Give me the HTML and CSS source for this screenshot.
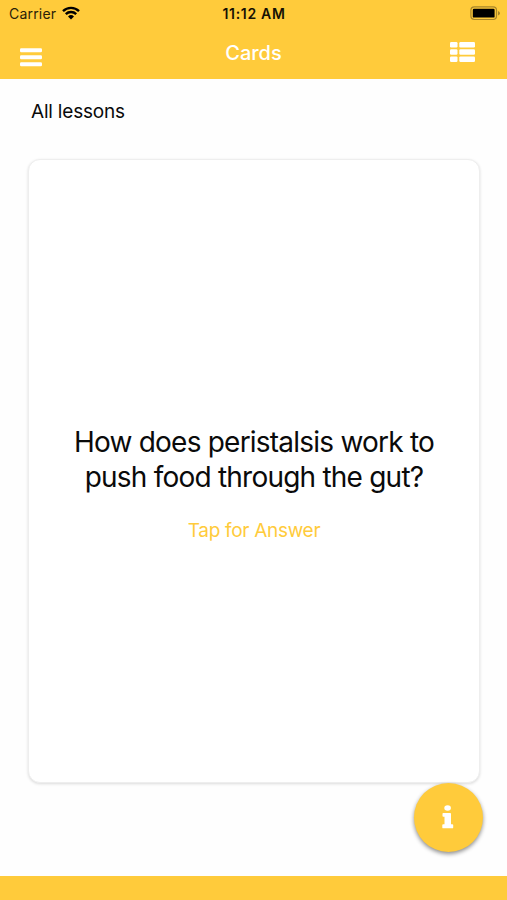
FILE: index.html
```html
<!DOCTYPE html>
<html lang="en">
<head>
    <meta charset="UTF-8">
    <meta name="viewport" content="width=device-width, initial-scale=1.0">
    <title>Cards</title>
    <link rel="stylesheet" href="styles.css">
</head>
<body>
    <header>
        <div class="status">
            <div class="carrier">
                <span>Carrier</span>
                <svg class="wifi" width="18" height="14" viewBox="0 0 18 14">
                    <path d="M1 5.2a11.4 11.4 0 0 1 16 0M3.8 8.2a7.4 7.4 0 0 1 10.4 0" fill="none" stroke="#000" stroke-width="2.4"/>
                    <path d="M6 10.4a4.4 4.4 0 0 1 6 0L9 13.5z"/>
                </svg>
            </div>
            <span class="clock">11:12 AM</span>
            <svg class="battery" width="31" height="15" viewBox="0 0 31 15">
                <rect x=".9" y=".9" width="25.6" height="12.6" rx="3.4" fill="none" stroke="#a8862a" stroke-width="1.2"/>
                <rect x="2.8" y="2.8" width="21.8" height="8.8" rx="1.2"/>
                <path d="M28 5v4.4q2-.9 2-2.2T28 5z" fill="#a8862a"/>
            </svg>
        </div>
        <div class="navbar">
            <svg class="menu" width="22" height="19" viewBox="0 0 22 19" fill="#fff">
                <rect y=".3" width="22" height="4" rx="1.2"/>
                <rect y="7.3" width="22" height="4" rx="1.2"/>
                <rect y="14.3" width="22" height="4" rx="1.2"/>
            </svg>
            <h1>Cards</h1>
            <svg class="list" width="25" height="20" viewBox="0 0 25 20" fill="#fff">
                <rect width="7.5" height="5.5" rx="1.2"/>
                <rect x="9.3" width="15.7" height="5.5" rx="1.2"/>
                <rect y="7.2" width="7.5" height="5.5" rx="1.2"/>
                <rect x="9.3" y="7.2" width="15.7" height="5.5" rx="1.2"/>
                <rect y="14.4" width="7.5" height="5.5" rx="1.2"/>
                <rect x="9.3" y="14.4" width="15.7" height="5.5" rx="1.2"/>
            </svg>
        </div>
    </header>

    <main>
        <h2>All lessons</h2>
        <div class="card">
            <p class="question">How does peristalsis work to<br>push food through the gut?</p>
            <p class="hint">Tap for Answer</p>
        </div>
    </main>

    <button class="info" aria-label="Info">
        <svg width="12" height="24" viewBox="0 0 12 24" fill="#fff">
            <ellipse cx="5.6" cy="3" rx="3.3" ry="2.8"/>
            <path d="M1.3 8h6.9q.8 0 .8.8v10.4h1.3q.9 0 .9.9v2.3q0 .9-.9.9H1.2q-.9 0-.9-.9v-2.3q0-.9.9-.9h1.3v-7.4H1.3q-.8 0-.8-.8V8.8q0-.8.8-.8z"/>
        </svg>
    </button>

    <footer></footer>
</body>
</html>
```
FILE: styles.css
```css
* {
    box-sizing: border-box;
}
body {
    display: flex;
    flex-direction: column;
    height: 900px;
    margin: 0;
    background: #fefefe;
    color: #0a0a0a;
    font-family: Inter, 'Liberation Sans', sans-serif;
}
h1, h2, p {
    margin: 0;
    font-weight: 400;
}
svg {
    display: block;
}
header {
    height: 79px;
    background: #ffcb3b;
}
.status {
    display: grid;
    grid-template-columns: 1fr auto 1fr;
    height: 27px;
    padding: 0 6px 0 9px;
    align-items: center;
    font-size: 14px;
}
.carrier {
    display: flex;
    gap: 6px;
    color: #2a2108;
    letter-spacing: .2px;
}
.wifi {
    margin-top: 1px;
}
.clock {
    margin-right: 2px;
    color: #161104;
    font-weight: 600;
    letter-spacing: .7px;
}
.battery {
    justify-self: end;
}
.navbar {
    display: grid;
    grid-template-columns: 1fr auto 1fr;
    height: 52px;
    padding: 0 32px 0 20px;
    align-items: center;
}
.menu {
    margin-top: 8px;
}
h1 {
    color: #fff;
    font-size: 20px;
    font-weight: 500;
    margin-left: 12px;
}
.list {
    justify-self: end;
    margin-bottom: 2px;
}
main {
    display: flex;
    flex: 1;
    flex-direction: column;
    padding: 20px 27px 93px 28px;
}
h2 {
    height: 60px;
    padding: 1px 0 0 3px;
    font-size: 19px;
    letter-spacing: -.2px;
    line-height: 24px;
}
.card {
    display: flex;
    flex: 1;
    flex-direction: column;
    align-items: center;
    justify-content: center;
    padding-top: 25px;
    border: 1px solid #eee;
    border-radius: 12px;
    background: #fff;
    box-shadow: 0 1px 3px rgba(0, 0, 0, .14);
}
.question {
    font-size: 28px;
    letter-spacing: -.78px;
    line-height: 35px;
    text-align: center;
    white-space: nowrap;
}
.hint {
    margin-top: 24px;
    color: #ffcb3b;
    font-size: 19px;
    letter-spacing: -.3px;
    line-height: 24px;
}
.info {
    position: absolute;
    top: 783px;
    left: 414px;
    display: flex;
    width: 69px;
    height: 69px;
    padding: 0 2px 2px 0;
    align-items: center;
    justify-content: center;
    border: 0;
    border-radius: 50%;
    background: #ffcb3b;
    box-shadow: 0 2px 4px rgba(0, 0, 0, .45);
}
footer {
    height: 24px;
    background: #ffcb3b;
}
```
